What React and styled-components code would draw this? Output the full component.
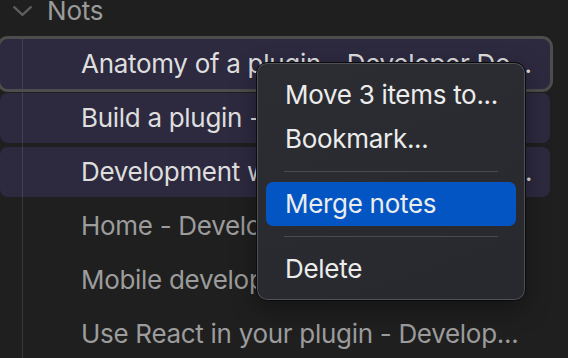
import React from "react";
import styled, { createGlobalStyle } from "styled-components";

const GlobalStyle = createGlobalStyle`
  html, body {
    margin: 0;
    padding: 0;
    background: #1f1f1f;
  }
  body {
    font-family: Inter, "Noto Sans", sans-serif;
    -webkit-font-smoothing: antialiased;
  }
`;

const Page = styled.div`
  position: relative;
  width: 568px;
  height: 358px;
  overflow: hidden;
  background: #1f1f1f;
`;

const Header = styled.div`
  display: flex;
  align-items: center;
  gap: 15px;
  height: 22px;
  padding-left: 13px;
`;

const Chevron = styled.svg`
  width: 19px;
  height: 10px;
  flex: none;
`;

const GroupTitle = styled.span`
  font-size: 26px;
  line-height: 26px;
  color: #9a9a9a;
  letter-spacing: -0.2px;
`;

const List = styled.div`
  position: relative;
  display: flex;
  flex-direction: column;
  gap: 4px;
  padding-top: 17px;
  width: 550px;

  &::before {
    content: "";
    position: absolute;
    left: 22px;
    top: 17px;
    bottom: -40px;
    width: 1px;
    background: rgba(255, 255, 255, 0.11);
    z-index: 1;
  }
`;

const Row = styled.div`
  position: relative;
  display: flex;
  align-items: center;
  height: 50px;
  flex: none;
  padding-left: 81px;
  border-radius: 8px;
  background: ${(p) => (p.$selected ? "#2d2a40" : "transparent")};
  color: ${(p) => (p.$selected ? "#dedede" : "#9c9c9c")};
  font-size: 26px;
  line-height: 30px;
  letter-spacing: -0.3px;
  white-space: pre;

  ${(p) =>
    p.$focused &&
    `
    &::after {
      content: "";
      position: absolute;
      inset: -3px;
      border: 3px solid #4d4d4d;
      border-radius: 11px;
      z-index: 2;
    }
  `}
`;

const Menu = styled.div`
  position: absolute;
  left: 256px;
  top: 62px;
  width: 270px;
  box-sizing: border-box;
  display: flex;
  flex-direction: column;
  padding: 10px 9px 9px;
  background: linear-gradient(160deg, #2c2d33 0%, #28292f 100%);
  border: 1px solid #0b0b0b;
  border-radius: 11px;
  box-shadow: inset 0 0 0 1px #4f5157, 0 8px 24px rgba(0, 0, 0, 0.35);
  z-index: 5;
`;

const MenuItem = styled.div`
  display: flex;
  align-items: center;
  height: 44px;
  padding-left: 19px;
  border-radius: 7px;
  font-size: 26px;
  line-height: 30px;
  letter-spacing: -0.3px;
  color: #ececec;
  white-space: nowrap;
  background: ${(p) => (p.$active ? "#0255c3" : "transparent")};
`;

const Separator = styled.div`
  height: 1px;
  margin: 10px 18px;
  background: #4a4b51;
`;

const rows = [
  { text: "Anatomy of a plugin - Developer Do...", selected: true, focused: true },
  { text: "Build a plugin - Developer Docs", selected: true },
  { text: "Development workflow - Developer\u2009...", selected: true },
  { text: "Home - Developer Docs" },
  { text: "Mobile development" },
  { text: "Use React in your plugin - Develop..." },
];

export default function App() {
  return (
    <Page>
      <GlobalStyle />
      <Header>
        <Chevron viewBox="0 0 19 10">
          <polyline
            points="1.2,1.2 9.5,8.8 17.8,1.2"
            fill="none"
            stroke="#5e5e5e"
            strokeWidth="2.3"
            strokeLinecap="round"
            strokeLinejoin="round"
          />
        </Chevron>
        <GroupTitle>Nots</GroupTitle>
      </Header>
      <List>
        {rows.map((r) => (
          <Row key={r.text} $selected={r.selected} $focused={r.focused}>
            {r.text}
          </Row>
        ))}
      </List>
      <Menu>
        <MenuItem>Move 3 items to...</MenuItem>
        <MenuItem>Bookmark...</MenuItem>
        <Separator />
        <MenuItem $active>Merge notes</MenuItem>
        <Separator />
        <MenuItem>Delete</MenuItem>
      </Menu>
    </Page>
  );
}
